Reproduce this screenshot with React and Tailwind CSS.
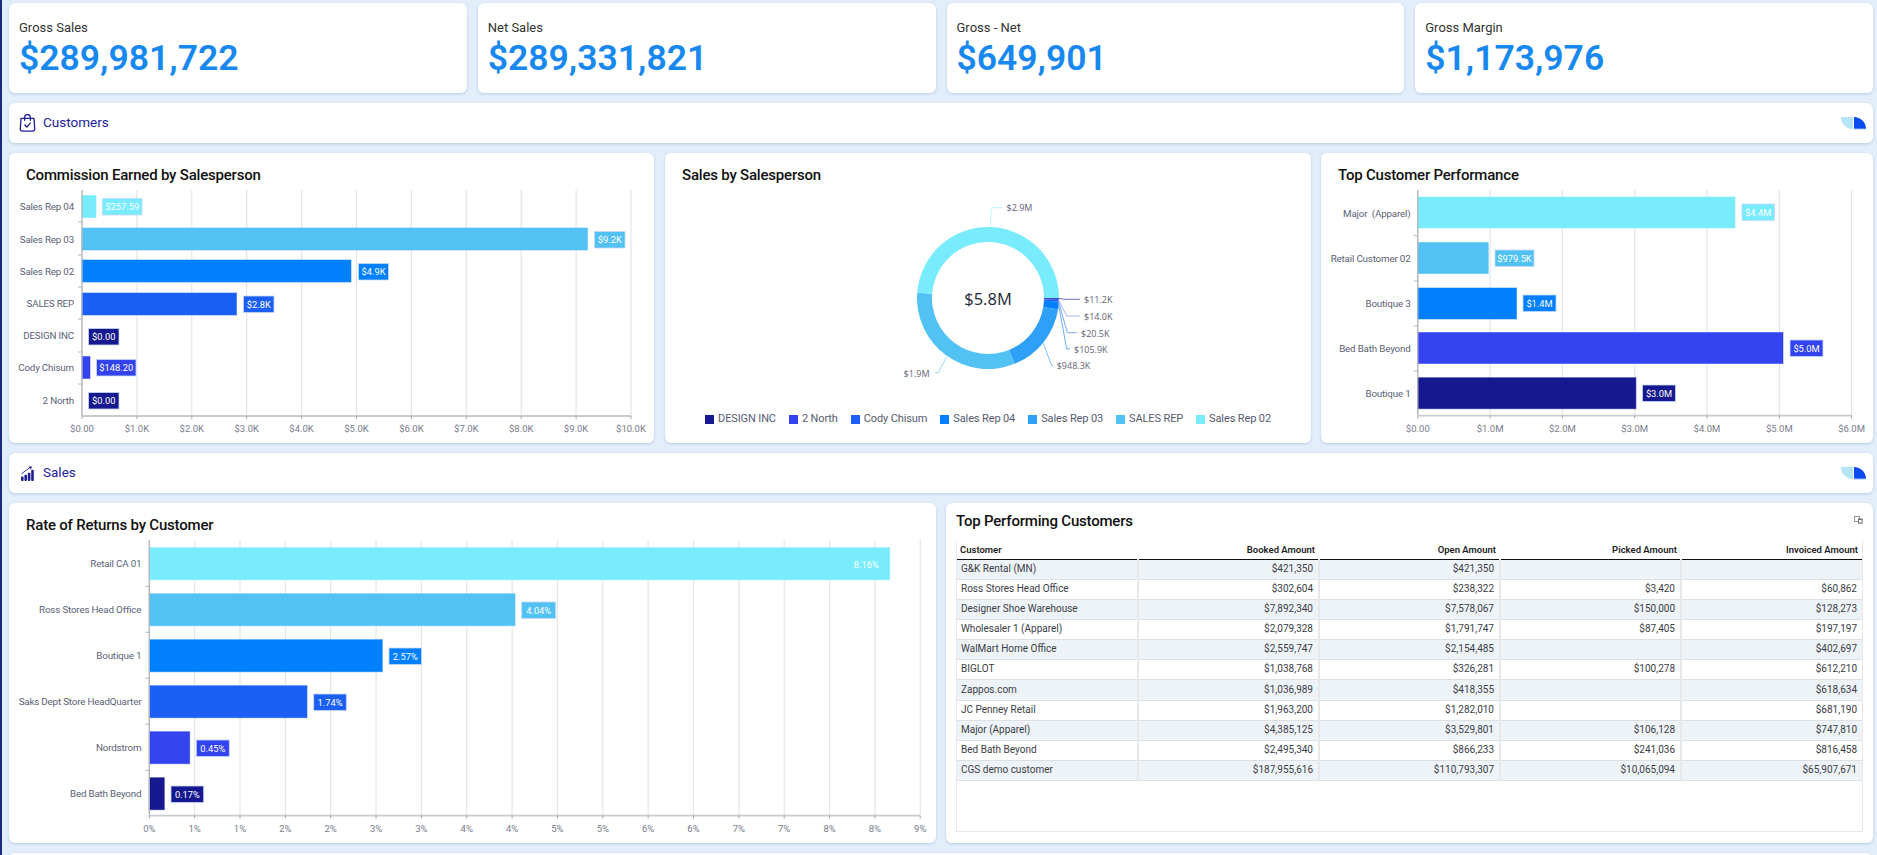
import React from "react";

const C = ["#16188f", "#3343ef", "#1b5ff5", "#0080ff", "#2ea0f8", "#52c2f4", "#78ecfd"];
const FONT = "Roboto, sans-serif";

function Card({ className = "", children }) {
  return (
    <div className={`rounded-[6px] bg-white shadow-[0_1px_3px_rgba(120,150,190,0.4)] ${className}`}>{children}</div>
  );
}

function Kpi({ label, value }) {
  return (
    <Card className="flex h-[90px] flex-col pl-[10px] pt-[16px]">
      <div className="text-[13px] leading-[18px] text-[#333333]">{label}</div>
      <div className="mt-[1px] text-[35.5px] font-semibold leading-[41px] text-[#1688f0]">{value}</div>
    </Card>
  );
}

function Leaf() {
  return (
    <svg width="26" height="13" viewBox="0 0 26 13" className="block">
      <path d="M0 0H12V12A12 12 0 0 1 0 0Z" fill="#b4e5f6" />
      <path d="M13 0A12 12 0 0 1 25 12H13Z" fill="#0a4cf2" />
      <rect x="13" y="11.3" width="12" height="1" fill="#6f9cf5" />
    </svg>
  );
}

function BagIcon() {
  return (
    <svg width="17" height="18" viewBox="0 0 14 15" fill="none" stroke="#1f1f96" strokeWidth="1.1" strokeLinecap="round" strokeLinejoin="round" className="block shrink-0">
      <path d="M1.6 3.6H12.4L13 12.6A1.5 1.5 0 0 1 11.5 14.2H2.5A1.5 1.5 0 0 1 1 12.6Z" />
      <path d="M4.6 5.2V2.8A2.4 2.4 0 0 1 9.4 2.8V5.2" />
      <path d="M4.8 9.2L6.4 10.8L9.4 7.6" />
    </svg>
  );
}

function SalesIcon() {
  return (
    <svg width="13" height="15" viewBox="0 0 13 15" fill="#1f1f96" className="block">
      <rect x="0" y="10.5" width="2.6" height="4.5" rx="1" />
      <rect x="3.4" y="8.8" width="2.6" height="6.2" rx="1" />
      <rect x="6.8" y="6.8" width="2.6" height="8.2" rx="1" />
      <rect x="10.2" y="3.8" width="2.6" height="11.2" rx="1" />
      <path d="M0.4 7.8L8.6 1.8" stroke="#3a3ab0" strokeWidth="1" fill="none" />
      <path d="M7.4 0.6H11L10 3.6Z" />
    </svg>
  );
}

function SectionBar({ icon, title }) {
  return (
    <Card className="flex h-[40px] shrink-0 items-center justify-between pl-[12px] pr-[6px]">
      <div className="flex items-center gap-[9px]">
        <span className="flex w-[13px] justify-center">{icon}</span>
        <span className="pb-[1px] text-[13.5px] leading-none text-[#21219b]">{title}</span>
      </div>
      <Leaf />
    </Card>
  );
}

function ChartTitle({ children, className = "pl-[17px]" }) {
  return (
    <div className={`flex h-[37px] items-center pt-[7px] text-[15px] font-medium leading-none tracking-[-0.2px] text-[#111111] ${className}`}>{children}</div>
  );
}

function BarChart({ vb, x0, top, axisY, ticks, rowTicks, labelX, bars, axisLabelY }) {
  return (
    <svg width={vb[2]} height={vb[3]} viewBox={vb.join(" ")} className="block" style={{ fontFamily: FONT }}>
      {ticks.map((t, i) => (
        <line key={i} x1={t.x} x2={t.x} y1={top} y2={axisY} stroke="#e3e5e9" strokeWidth="1.2" />
      ))}
      {bars.map((b, i) =>
        b.end ? (
          <rect key={i} x={x0} y={b.top} width={b.end - x0} height={b.h} fill={b.c} stroke={b.c} strokeOpacity="0.55" strokeWidth="1" />
        ) : null
      )}
      <line x1={x0} x2={x0} y1={top} y2={axisY} stroke="#b4b6bb" strokeWidth="1.3" />
      {rowTicks.map((y, i) => (
        <line key={i} x1={x0 - 4} x2={x0} y1={y} y2={y} stroke="#b4b6bb" strokeWidth="1" />
      ))}
      <line x1={x0} x2={ticks[ticks.length - 1].x} y1={axisY} y2={axisY} stroke="#c9cacd" strokeWidth="1.8" />
      {ticks.map((t, i) => (
        <g key={i}>
          <line x1={t.x} x2={t.x} y1={axisY} y2={axisY + 3} stroke="#a6a8ad" strokeWidth="1" />
          <text x={t.x} y={axisLabelY} textAnchor="middle" dominantBaseline="central" fontSize="9.5" fill="#787c8c">{t.l}</text>
        </g>
      ))}
      {bars.map((b, i) => (
        <text key={i} x={labelX} y={b.cy} textAnchor="end" dominantBaseline="central" fontSize="9.8" letterSpacing="-0.18" fill="#5a5f75" style={{ whiteSpace: "pre" }}>{b.name}</text>
      ))}
      {bars.map((b, i) => (
        <g key={i}>
          {b.bw ? (
            <rect x={b.bx} y={b.by} width={b.bw} height={b.bh || 16.5} fill={b.c} stroke="#c3d9fb" strokeWidth="0.8" />
          ) : null}
          <text x={b.bw ? b.bx + b.bw / 2 : b.bx} y={b.by + (b.bh || 16.5) / 2} textAnchor="middle" dominantBaseline="central" fontSize="9.3" fill="#ffffff">{b.v}</text>
        </g>
      ))}
    </svg>
  );
}

const t1x = [82, 136.9, 191.8, 246.7, 301.6, 356.5, 411.4, 466.3, 521.2, 576.1, 631];
const commission = {
  vb: [9, 190, 645, 253], x0: 82, top: 190, axisY: 416, axisLabelY: 428, labelX: 74,
  ticks: t1x.map((x, i) => ({ x, l: i === 0 ? "$0.00" : `$${i}.0K` })),
  rowTicks: [222, 255, 287, 319, 352, 384],
  bars: [
    { name: "Sales Rep 04", cy: 206.5, top: 195.5, h: 22, end: 96, c: C[6], bx: 102.5, bw: 39.5, by: 198.5, v: "$257.59" },
    { name: "Sales Rep 03", cy: 239.5, top: 228, h: 22, end: 587.5, c: C[5], bx: 594.5, bw: 30.5, by: 231.5, v: "$9.2K" },
    { name: "Sales Rep 02", cy: 271.5, top: 260, h: 22, end: 351, c: C[3], bx: 358.5, bw: 30, by: 263.5, v: "$4.9K" },
    { name: "SALES REP", cy: 303.5, top: 293, h: 22, end: 236.5, c: C[2], bx: 243.5, bw: 30.5, by: 296, v: "$2.8K" },
    { name: "DESIGN INC", cy: 335.5, c: C[0], bx: 88.5, bw: 30.5, by: 328.5, v: "$0.00" },
    { name: "Cody Chisum", cy: 367.5, top: 356.5, h: 22, end: 90, c: C[1], bx: 96.5, bw: 39.5, by: 359.5, v: "$148.20" },
    { name: "2 North", cy: 400.5, c: C[0], bx: 88.5, bw: 30.5, by: 392.5, v: "$0.00" },
  ],
};

const t3x = [1417.8, 1490.1, 1562.4, 1634.7, 1707, 1779.3, 1851.6];
const topCust = {
  vb: [1321, 190, 552, 253], x0: 1417.8, top: 190, axisY: 415.7, axisLabelY: 428, labelX: 1410.5,
  ticks: t3x.map((x, i) => ({ x, l: i === 0 ? "$0.00" : `$${i}.0M` })),
  rowTicks: [235.7, 281, 326, 371],
  bars: [
    { name: "Major  (Apparel)", cy: 213.7, top: 197, h: 31, end: 1735, c: C[6], bx: 1742, bw: 32.4, by: 204, v: "$4.4M" },
    { name: "Retail Customer 02", cy: 258.7, top: 242.5, h: 31, end: 1488.3, c: C[5], bx: 1495, bw: 39, by: 250, v: "$979.5K" },
    { name: "Boutique 3", cy: 303.7, top: 288, h: 31, end: 1516.5, c: C[3], bx: 1523, bw: 33, by: 295, v: "$1.4M" },
    { name: "Bed Bath Beyond", cy: 348.7, top: 332.5, h: 31, end: 1783, c: C[1], bx: 1790, bw: 33, by: 340, v: "$5.0M" },
    { name: "Boutique 1", cy: 393.7, top: 377.7, h: 31, end: 1635.9, c: C[0], bx: 1642.5, bw: 33, by: 385, v: "$3.0M" },
  ],
};

const pctLabels = ["0%", "1%", "1%", "2%", "2%", "3%", "3%", "4%", "4%", "5%", "5%", "6%", "6%", "7%", "7%", "8%", "8%", "9%"];
const returns = {
  vb: [9, 540, 927, 303], x0: 149.3, top: 540, axisY: 815.7, axisLabelY: 828, labelX: 141.3,
  ticks: pctLabels.map((l, i) => ({ x: 149.3 + i * 45.35, l })),
  rowTicks: [586.3, 632.3, 678.3, 724.3, 770.3],
  bars: [
    { name: "Retail CA 01", cy: 563.7, top: 547.7, h: 32, end: 889.7, c: C[6], bx: 866.3, by: 556.7, v: "8.16%" },
    { name: "Ross Stores Head Office", cy: 609.7, top: 593.7, h: 32, end: 515, c: C[5], bx: 521.7, bw: 34, by: 602, v: "4.04%" },
    { name: "Boutique 1", cy: 655.7, top: 639.7, h: 32, end: 382.3, c: C[3], bx: 389, bw: 32.6, by: 648, v: "2.57%" },
    { name: "Saks Dept Store HeadQuarter", cy: 701.7, top: 685.7, h: 32, end: 307, c: C[2], bx: 313.7, bw: 32.6, by: 694, v: "1.74%" },
    { name: "Nordstrom", cy: 747.7, top: 731.7, h: 32, end: 189.7, c: C[1], bx: 196.3, bw: 33, by: 740, v: "0.45%" },
    { name: "Bed Bath Beyond", cy: 793.7, top: 777.7, h: 32, end: 164.3, c: C[0], bx: 171, bw: 32.7, by: 786, v: "0.17%" },
  ],
};

function Donut() {
  const cx = 988, cy = 298, R = 71, r = 56;
  const vals = [
    [11.2, C[0]], [14, C[1]], [20.5, C[2]], [105.9, C[3]], [948.3, C[4]], [1880, C[5]], [2843, C[6]],
  ];
  const total = vals.reduce((s, v) => s + v[0], 0);
  let a = 0;
  const pt = (rad, ang) => [cx + rad * Math.cos(ang), cy + rad * Math.sin(ang)];
  const arcs = vals.map(([v, col], i) => {
    const a0 = a, a1 = a + (v / total) * Math.PI * 2;
    a = a1;
    const lg = a1 - a0 > Math.PI ? 1 : 0;
    const p0 = pt(R, a0), p1 = pt(R, a1), p2 = pt(r, a1), p3 = pt(r, a0);
    const d = `M${p0[0]} ${p0[1]}A${R} ${R} 0 ${lg} 1 ${p1[0]} ${p1[1]}L${p2[0]} ${p2[1]}A${r} ${r} 0 ${lg} 0 ${p3[0]} ${p3[1]}Z`;
    return <path key={i} d={d} fill={col} />;
  });
  const leaders = [
    { p: "990,226.7 991.3,207.7 1001.7,207.7", c: "#bff5fe", t: "$2.9M", x: 1006.5, y: 207.7 },
    { p: "1058.3,298.3 1065,299.3 1080,299.3", c: "#6c6eb8", t: "$11.2K", x: 1084, y: 299.3 },
    { p: "1058.3,299.5 1066.7,316 1080,316", c: "#aab2f8", t: "$14.0K", x: 1084, y: 316 },
    { p: "1058.3,300.7 1067.3,332.7 1076.7,332.7", c: "#7ea4f8", t: "$20.5K", x: 1081, y: 333 },
    { p: "1058.3,303 1066.7,349 1070,349", c: "#66b0ff", t: "$105.9K", x: 1074, y: 349 },
    { p: "1043.3,343.3 1051.7,365.7 1053.3,365.7", c: "#80c4fa", t: "$948.3K", x: 1056.7, y: 365.7 },
    { p: "946.7,356.7 938.3,372.7 935,372.7", c: "#98dcf8", t: "$1.9M", x: 929.5, y: 373, end: true },
  ];
  return (
    <svg width="646" height="216" viewBox="665 190 646 216" className="block">
      {arcs}
      {leaders.map((l, i) => (
        <g key={i}>
          <polyline points={l.p} fill="none" stroke={l.c} strokeWidth="1" />
          <text x={l.x} y={l.y} dominantBaseline="central" textAnchor={l.end ? "end" : "start"} fontSize="9" fill="#5f6375" style={{ fontFamily: "'Open Sans', sans-serif" }}>{l.t}</text>
        </g>
      ))}
      <text x={cx} y={cy} textAnchor="middle" dominantBaseline="central" fontSize="16.5" fontWeight="500" fill="#232635" style={{ fontFamily: "'Open Sans', sans-serif" }}>$5.8M</text>
    </svg>
  );
}

const legend = [
  ["DESIGN INC", C[0]], ["2 North", C[1]], ["Cody Chisum", C[2]], ["Sales Rep 04", C[3]],
  ["Sales Rep 03", C[4]], ["SALES REP", C[5]], ["Sales Rep 02", C[6]],
];

const rows = [
  ["G&K Rental (MN)", "$421,350", "$421,350", "", ""],
  ["Ross Stores Head Office", "$302,604", "$238,322", "$3,420", "$60,862"],
  ["Designer Shoe Warehouse", "$7,892,340", "$7,578,067", "$150,000", "$128,273"],
  ["Wholesaler 1 (Apparel)", "$2,079,328", "$1,791,747", "$87,405", "$197,197"],
  ["WalMart Home Office", "$2,559,747", "$2,154,485", "", "$402,697"],
  ["BIGLOT", "$1,038,768", "$326,281", "$100,278", "$612,210"],
  ["Zappos.com", "$1,036,989", "$418,355", "", "$618,634"],
  ["JC Penney Retail", "$1,963,200", "$1,282,010", "", "$681,190"],
  ["Major (Apparel)", "$4,385,125", "$3,529,801", "$106,128", "$747,810"],
  ["Bed Bath Beyond", "$2,495,340", "$866,233", "$241,036", "$816,458"],
  ["CGS demo customer", "$187,955,616", "$110,793,307", "$10,065,094", "$65,907,671"],
];
const heads = ["Customer", "Booked Amount", "Open Amount", "Picked Amount", "Invoiced Amount"];

function DataTable() {
  return (
    <div className="mx-[10px] h-[291px] border-x border-b border-[#e6e8ec]">
      <table className="w-full table-fixed border-collapse text-[10px] leading-none">
        <thead>
          <tr className="h-[18px] border-b-[1.5px] border-[#111111]">
            {heads.map((h, i) => (
              <th key={h} className={`text-[9.5px] font-semibold text-[#1c1c1c] ${i === 0 ? "pl-[3px] text-left" : "pr-[4px] text-right"}`}>{h}</th>
            ))}
          </tr>
        </thead>
        <tbody>
          {rows.map((r, ri) => (
            <tr key={ri} className={`${ri === 6 ? "h-[21px]" : "h-[20px]"} border-b-[1.5px] border-[#dcdfe3] ${ri % 2 === 0 ? "bg-[#eef3f7]" : "bg-white"}`}>
              {r.map((c, ci) => (
                <td key={ci} className={`text-[#3a3d46] ${ci === 0 ? "pl-[4px] text-left" : "pr-[5px] text-right"} ${ci < 4 ? "border-r-2 border-[#e6e8ec]" : ""}`}>{c}</td>
              ))}
            </tr>
          ))}
        </tbody>
      </table>
    </div>
  );
}

export default function App() {
  return (
    <div
      className="flex h-[855px] w-[1877px] flex-col gap-[10px] overflow-hidden border-l-2 border-[#1a2a80] bg-[#e3eefb] pl-[7px] pr-[4px] pt-[3px]"
      style={{ fontFamily: FONT }}
    >
      <div className="grid h-[90px] shrink-0 grid-cols-4 gap-[11px]">
        <Kpi label="Gross Sales" value="$289,981,722" />
        <Kpi label="Net Sales" value="$289,331,821" />
        <Kpi label="Gross - Net" value="$649,901" />
        <Kpi label="Gross Margin" value="$1,173,976" />
      </div>

      <SectionBar icon={<BagIcon />} title="Customers" />

      <div className="flex h-[290px] shrink-0 gap-[10px]">
        <Card className="h-full w-[645px]">
          <ChartTitle>Commission Earned by Salesperson</ChartTitle>
          <BarChart {...commission} />
        </Card>
        <Card className="ml-[1px] h-full w-[646px]">
          <ChartTitle>Sales by Salesperson</ChartTitle>
          <Donut />
          <div className="flex items-center justify-center gap-[13px] text-[11px] leading-[26px] tracking-[-0.12px] text-[#565b6f]">
            {legend.map(([l, c]) => (
              <div key={l} className="flex items-center gap-[4px]">
                <span className="h-[9px] w-[9px]" style={{ backgroundColor: c }} />
                <span>{l}</span>
              </div>
            ))}
          </div>
        </Card>
        <Card className="h-full w-[552px]">
          <ChartTitle>Top Customer Performance</ChartTitle>
          <BarChart {...topCust} />
        </Card>
      </div>

      <SectionBar icon={<SalesIcon />} title="Sales" />

      <div className="flex h-[340px] shrink-0 gap-[10px]">
        <Card className="h-full w-[927px]">
          <ChartTitle>Rate of Returns by Customer</ChartTitle>
          <BarChart {...returns} />
        </Card>
        <Card className="h-full w-[927px]">
          <div className="flex h-[38px] items-start justify-between pl-[10px] pr-[10px] pt-[9px]">
            <div className="text-[15px] font-medium leading-[18px] tracking-[-0.2px] text-[#111111]">Top Performing Customers</div>
            <svg width="9" height="8" viewBox="0 0 9 8" className="mt-[4px] block">
              <rect x="0.4" y="0.4" width="5" height="5" fill="#fff" stroke="#7c8087" strokeWidth="0.8" />
              <rect x="4" y="2.5" width="4.6" height="5.2" fill="#6e7278" />
              <rect x="5" y="4" width="2.6" height="2.6" fill="#fff" />
            </svg>
          </div>
          <DataTable />
        </Card>
      </div>

      <SectionBar icon={null} title="" />
    </div>
  );
}
